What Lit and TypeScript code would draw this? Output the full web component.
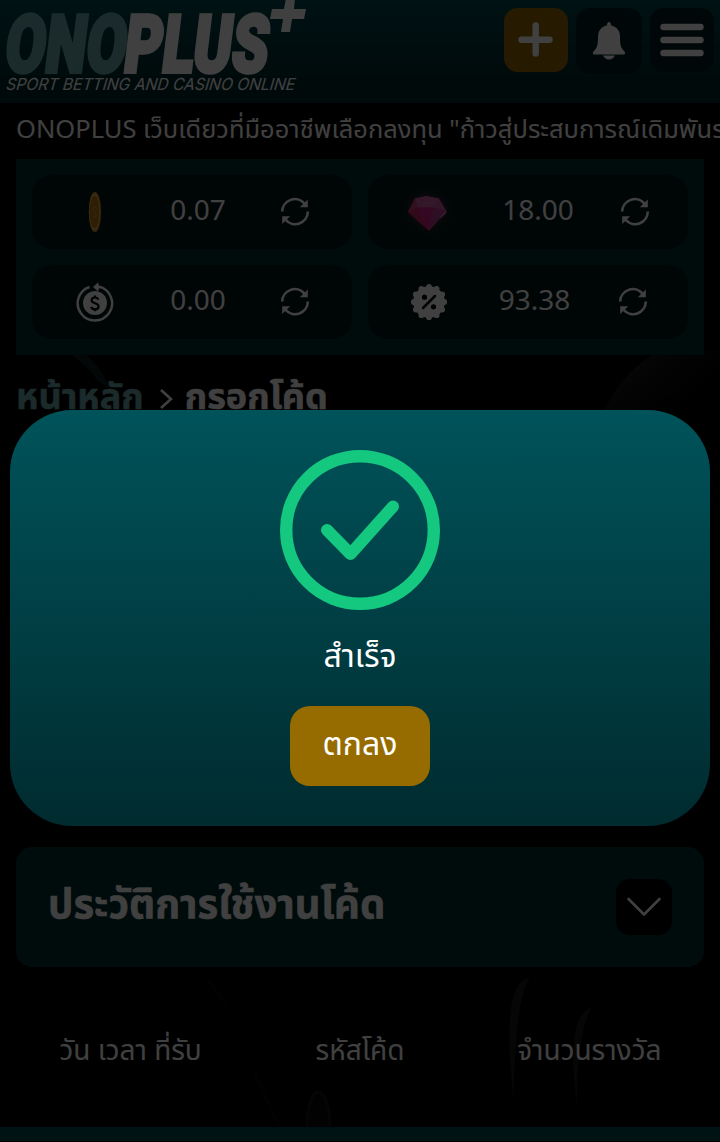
import { LitElement, html, css, svg } from "lit";
import { customElement } from "lit/decorators.js";

const coin = svg`<svg class="ico" viewBox="0 0 40 40">
  <ellipse cx="20" cy="20" rx="6.2" ry="20" fill="#c88c34"/>
  <ellipse cx="19.500" cy="20" rx="5.700" ry="19.300" fill="#e0a038"/>
  <ellipse cx="19.500" cy="20" rx="4.200" ry="15.500" fill="#b87814" stroke="#a06814" stroke-width=".6"/>
  <path d="M21.3 16.500c-1-2-3.600-1.500-3.600 1s3.600 2.500 3.600 5-2.600 3-3.600 1" fill="none" stroke="#d8a040" stroke-width="1"/>
</svg>`;

const gem = svg`<svg class="ico glow" viewBox="0 0 40 40">
  <path d="M8 6.500 19 4l13 2.500 7.500 13L22 38.500 1 20z" fill="#d82890"/>
  <path d="M8 6.500 19 4l13 2.500-6 9-15 0z" fill="#c860a0"/>
  <path d="M8 6.500 11 15.500 1 20z" fill="#c84078"/>
  <path d="M1 20l10-4.500L21 38z" fill="#c82464"/>
  <path d="M32 6.500l7.500 13L26 15.500z" fill="#c458a0"/>
  <path d="M26 15.500l13.500 4L22 38.500z" fill="#b43888"/>
  <path d="M11 15.500h15l-5 23z" fill="#d01c88"/>
  <path d="M39 20l-5.500 5.500" stroke="#d890c0" stroke-width="1.200"/>
</svg>`;

const cashback = svg`<svg class="ico" viewBox="0 0 40 40">
  <path d="M14.500 5A17.200 17.200 0 1 0 25 4.900" fill="none" stroke="#fff" stroke-width="2.400"/>
  <path d="M18.500 5l4.500-4v2.500l4 1.500-4 1.500v2.500z" fill="#fff" stroke="#fff" stroke-linejoin="round"/>
  <circle cx="20" cy="21" r="12" fill="#fff"/>
  <path d="M23.300 17.600c-.7-1.600-2-2.100-3.400-2.100-2 0-3.300 1-3.300 2.700 0 3.900 7 2.200 7 6.200 0 1.800-1.500 2.900-3.600 2.900-1.900 0-3.300-.8-3.900-2.500M20 13.500v2M20 27v2.200" fill="none" stroke="#000a0a" stroke-width="2.200"/>
</svg>`;

const scallop = Array.from({ length: 12 }, (_, i) => {
  const a = (i * Math.PI) / 6;
  return svg`<circle cx=${20 + 15.200 * Math.sin(a)} cy=${20 - 15.200 * Math.cos(a)} r="2.900"/>`;
});
const percent = svg`<svg class="ico" viewBox="0 0 40 40">
  <g fill="#fff"><circle cx="20" cy="20" r="15.800"/>${scallop}</g>
  <circle cx="15.500" cy="15.200" r="2.600" fill="#000a0a"/><circle cx="24.500" cy="24.800" r="2.600" fill="#000a0a"/>
  <path d="M26 14 14 26" stroke="#000a0a" stroke-width="2.500" stroke-linecap="round"/>
</svg>`;

const refresh = svg`<svg class="ref" viewBox="0 0 30 30">
  <path d="M2.200 14.600A12.600 12.600 0 0 1 24.500 6.700M27.800 14.600A12.600 12.600 0 0 1 5.500 22.600" fill="none" stroke="#fff" stroke-width="2.600"/>
  <path d="M27.800 2.500v7.800h-8zM2.200 27v-7.800h8z" fill="#fff"/>
</svg>`;

const balances = [
  { cls: "a", icon: coin, value: "0.07" },
  { cls: "b", icon: gem, value: "18.00" },
  { cls: "a", icon: cashback, value: "0.00" },
  { cls: "d", icon: percent, value: "93.38" },
];

@customElement("app-root")
export class AppRoot extends LitElement {
  static styles = css`
    :host { display: block; position: relative; width: 720px; height: 1142px; overflow: hidden; background: #000;
      color: #fff; font-family: "Noto Sans", "Noto Sans Thai", sans-serif; }
    * { box-sizing: border-box; }
    svg { display: block; }
    .scene { position: absolute; inset: 0; }
    .page { position: relative; height: 100%; display: flex; flex-direction: column; }
    header { height: 103px; flex: none; display: flex; background: linear-gradient(#00484f, #00292c 80%); }
    .logo { width: 504px; flex: none; overflow: visible; }
    .tools { display: flex; gap: 8px; padding-top: 8px; }
    .tool { width: 66px; height: 66px; border-radius: 14px; background: #001e20; display: grid; place-items: center; }
    .tool.add { width: 64px; height: 64px; background: #966c00; }
    .tool.menu { width: 64px; height: 64px; }
    .ticker { height: 56px; flex: none; padding-left: 16px; font-size: 25.500px; line-height: 50px; white-space: nowrap; overflow: hidden; }
    .balances { margin: 0 16px; height: 196px; flex: none; padding: 16px; display: grid; grid-template-columns: 1fr 1fr;
      grid-template-rows: 1fr 1fr; gap: 16px; background: #002c2c; }
    .cell { border-radius: 20px; background: #001616; display: grid; align-items: center; justify-items: center; }
    .cell.a { grid-template-columns: 126px 80px 114px; }
    .cell.b { grid-template-columns: 118px 104px 90px; }
    .cell.d { grid-template-columns: 122px 89px 107px; }
    .ico { width: 40px; height: 40px; }
    .glow { filter: drop-shadow(0 0 6px #a0508077); }
    .ref { width: 30px; height: 30px; }
    .value { font-size: 28px; line-height: 40px; padding-bottom: 6px; }
    .crumbs { height: 492px; flex: none; padding: 19px 16px 0; display: flex; align-items: flex-start;
      font-size: 36px; font-weight: 700; line-height: 44px; white-space: nowrap; }
    .crumbs, .title { -webkit-text-stroke: .5px currentColor; }
    .home { color: #6ca8a8; }
    .crumbs svg { margin: 14px 12px 0 15px; }
    .history { margin: 0 16px; height: 120px; flex: none; border-radius: 16px; background: #002c2c; padding: 0 32px 0 32px;
      display: flex; align-items: center; justify-content: space-between; }
    .title { font-size: 40px; font-weight: 700; line-height: 60px; white-space: nowrap; padding-bottom: 8px; }
    .toggle { width: 56px; height: 56px; border-radius: 14px; background: #000; display: grid; place-items: center; }
    .thead { height: 160px; flex: none; padding: 0 16px; display: grid; grid-template-columns: repeat(3, 1fr);
      align-items: center; justify-items: center; font-size: 28px; white-space: nowrap; padding-top: 9px; }
    .foot { height: 14px; flex: none; background: #004c50; }
    .backdrop { position: absolute; inset: 0; background: rgba(0, 0, 0, .75); }
    .dialog { position: absolute; left: 10px; top: 410px; width: 700px; height: 416px; border-radius: 62px; padding-top: 40px;
      background: linear-gradient(#00535a, #002b2f); display: flex; flex-direction: column; align-items: center; }
    .message { font-size: 32px; line-height: 48px; margin-top: 21px; height: 48px; }
    .ok { margin-top: 27px; width: 140px; height: 80px; border: 0; border-radius: 20px; background: #966c00; color: #fff;
      font: inherit; font-size: 32px; line-height: 48px; padding: 0 0 6px; }
  `;

  render() {
    return html`
      <svg class="scene" viewBox="0 0 720 1142">
        <defs>
          <linearGradient id="arc" x1="0" y1="0" x2="1" y2=".6"><stop offset="0" stop-color="#303030"/><stop offset=".45" stop-color="#101010"/><stop offset="1" stop-color="#000"/></linearGradient>
        </defs>
        <path d="M604 410C620 378 640 362 660 350h60v60z" fill="url(#arc)"/>
        <path d="M72 355h14q14 10 24 34l-12-8q-12-16-26-26z" fill="#101c1e"/>
        <path d="M514 1100C506 1040 506 979 530 978c-10 12-16 60-16 122zM577 1105c-8-50-4-96 15-97-10 14-15 50-15 97z" fill="#181818"/>
        <path d="M307 1127c0-20 5-35 11-35s12 15 12 35" fill="#080808" stroke="#161616" stroke-width="3"/>
        <path d="M208 980l20 26M253 1070l26 56" stroke="#0a0a0a" stroke-width="3"/>
      </svg>
      <div class="page">
        <header>
          <svg class="logo" width="504" height="103" viewBox="0 0 504 103">
            <g transform="translate(0 72) skewX(-7)" font-family="Roboto" font-weight="900" font-size="80" stroke-width="4">
              <text x="3" y="0" textLength="121" lengthAdjust="spacingAndGlyphs" fill="#6ca8a8" stroke="#6ca8a8">ONO</text>
              <text x="122" y="0" textLength="144" lengthAdjust="spacingAndGlyphs" fill="#fff" stroke="#fff">PLUS</text>
            </g>
            <path d="M286-2h9l-1 11h12l-2 10h-12l-2 13h-9l2-13h-13l2-10h12z" fill="#fff"/>
            <text transform="translate(5 90) skewX(-16)" font-family="Inter" font-size="16.500" fill="#fff" textLength="289" lengthAdjust="spacingAndGlyphs">SPORT BETTING AND CASINO ONLINE</text>
          </svg>
          <div class="tools">
            <div class="tool add"><svg width="64" height="64"><path d="M31.700 17.500v28M17.500 31.700h28" stroke="#fff" stroke-width="6.400" stroke-linecap="round"/></svg></div>
            <div class="tool"><svg width="66" height="66"><path d="M33 14c1.500 0 2 1.500 2 3.500 6 1 9 5.500 9 11.500 0 8 1 11 4 14 2 2 1.300 3.500-1 3.500H19c-2.300 0-3-1.500-1-3.500 3-3 4-6 4-14 0-6 3-10.500 9-11.500 0-2 .5-3.500 2-3.500zM27 47.500h12q-2 4-6 4t-6-4z" fill="#fff"/></svg></div>
            <div class="tool menu"><svg width="64" height="64"><path d="M13.500 19h37M13.500 32h37M13.500 45h37" stroke="#fff" stroke-width="6.400" stroke-linecap="round"/></svg></div>
          </div>
        </header>
        <div class="ticker">ONOPLUS เว็บเดียวที่มืออาชีพเลือกลงทุน "ก้าวสู่ประสบการณ์เดิมพันร</div>
        <section class="balances">
          ${balances.map((b) => html`<div class="cell ${b.cls}">${b.icon}<span class="value">${b.value}</span>${refresh}</div>`)}
        </section>
        <nav class="crumbs">
          <span class="home">หน้าหลัก</span>
          <svg width="14" height="22"><path d="M2 2l10 9-10 9" fill="none" stroke="#fff" stroke-width="2.600"/></svg>
          <span>กรอกโค้ด</span>
        </nav>
        <section class="history">
          <span class="title">ประวัติการใช้งานโค้ด</span>
          <div class="toggle"><svg width="56" height="56"><path d="M12.500 20 28 35.500 43.500 20" fill="none" stroke="#fff" stroke-width="2.600" stroke-linecap="round" stroke-linejoin="round"/></svg></div>
        </section>
        <div class="thead"><span>วัน เวลา ที่รับ</span><span>รหัสโค้ด</span><span>จำนวนรางวัล</span></div>
        <div class="foot"></div>
      </div>
      <div class="backdrop"></div>
      <div class="dialog" role="dialog">
        <svg width="160" height="160"><circle cx="80" cy="80" r="73.800" fill="none" stroke="#14c880" stroke-width="12.400"/><path d="M47 80l23.500 24L113 56.500" fill="none" stroke="#14c880" stroke-width="12" stroke-linecap="round" stroke-linejoin="round"/></svg>
        <div class="message">สำเร็จ</div>
        <button class="ok">ตกลง</button>
      </div>`;
  }
}
